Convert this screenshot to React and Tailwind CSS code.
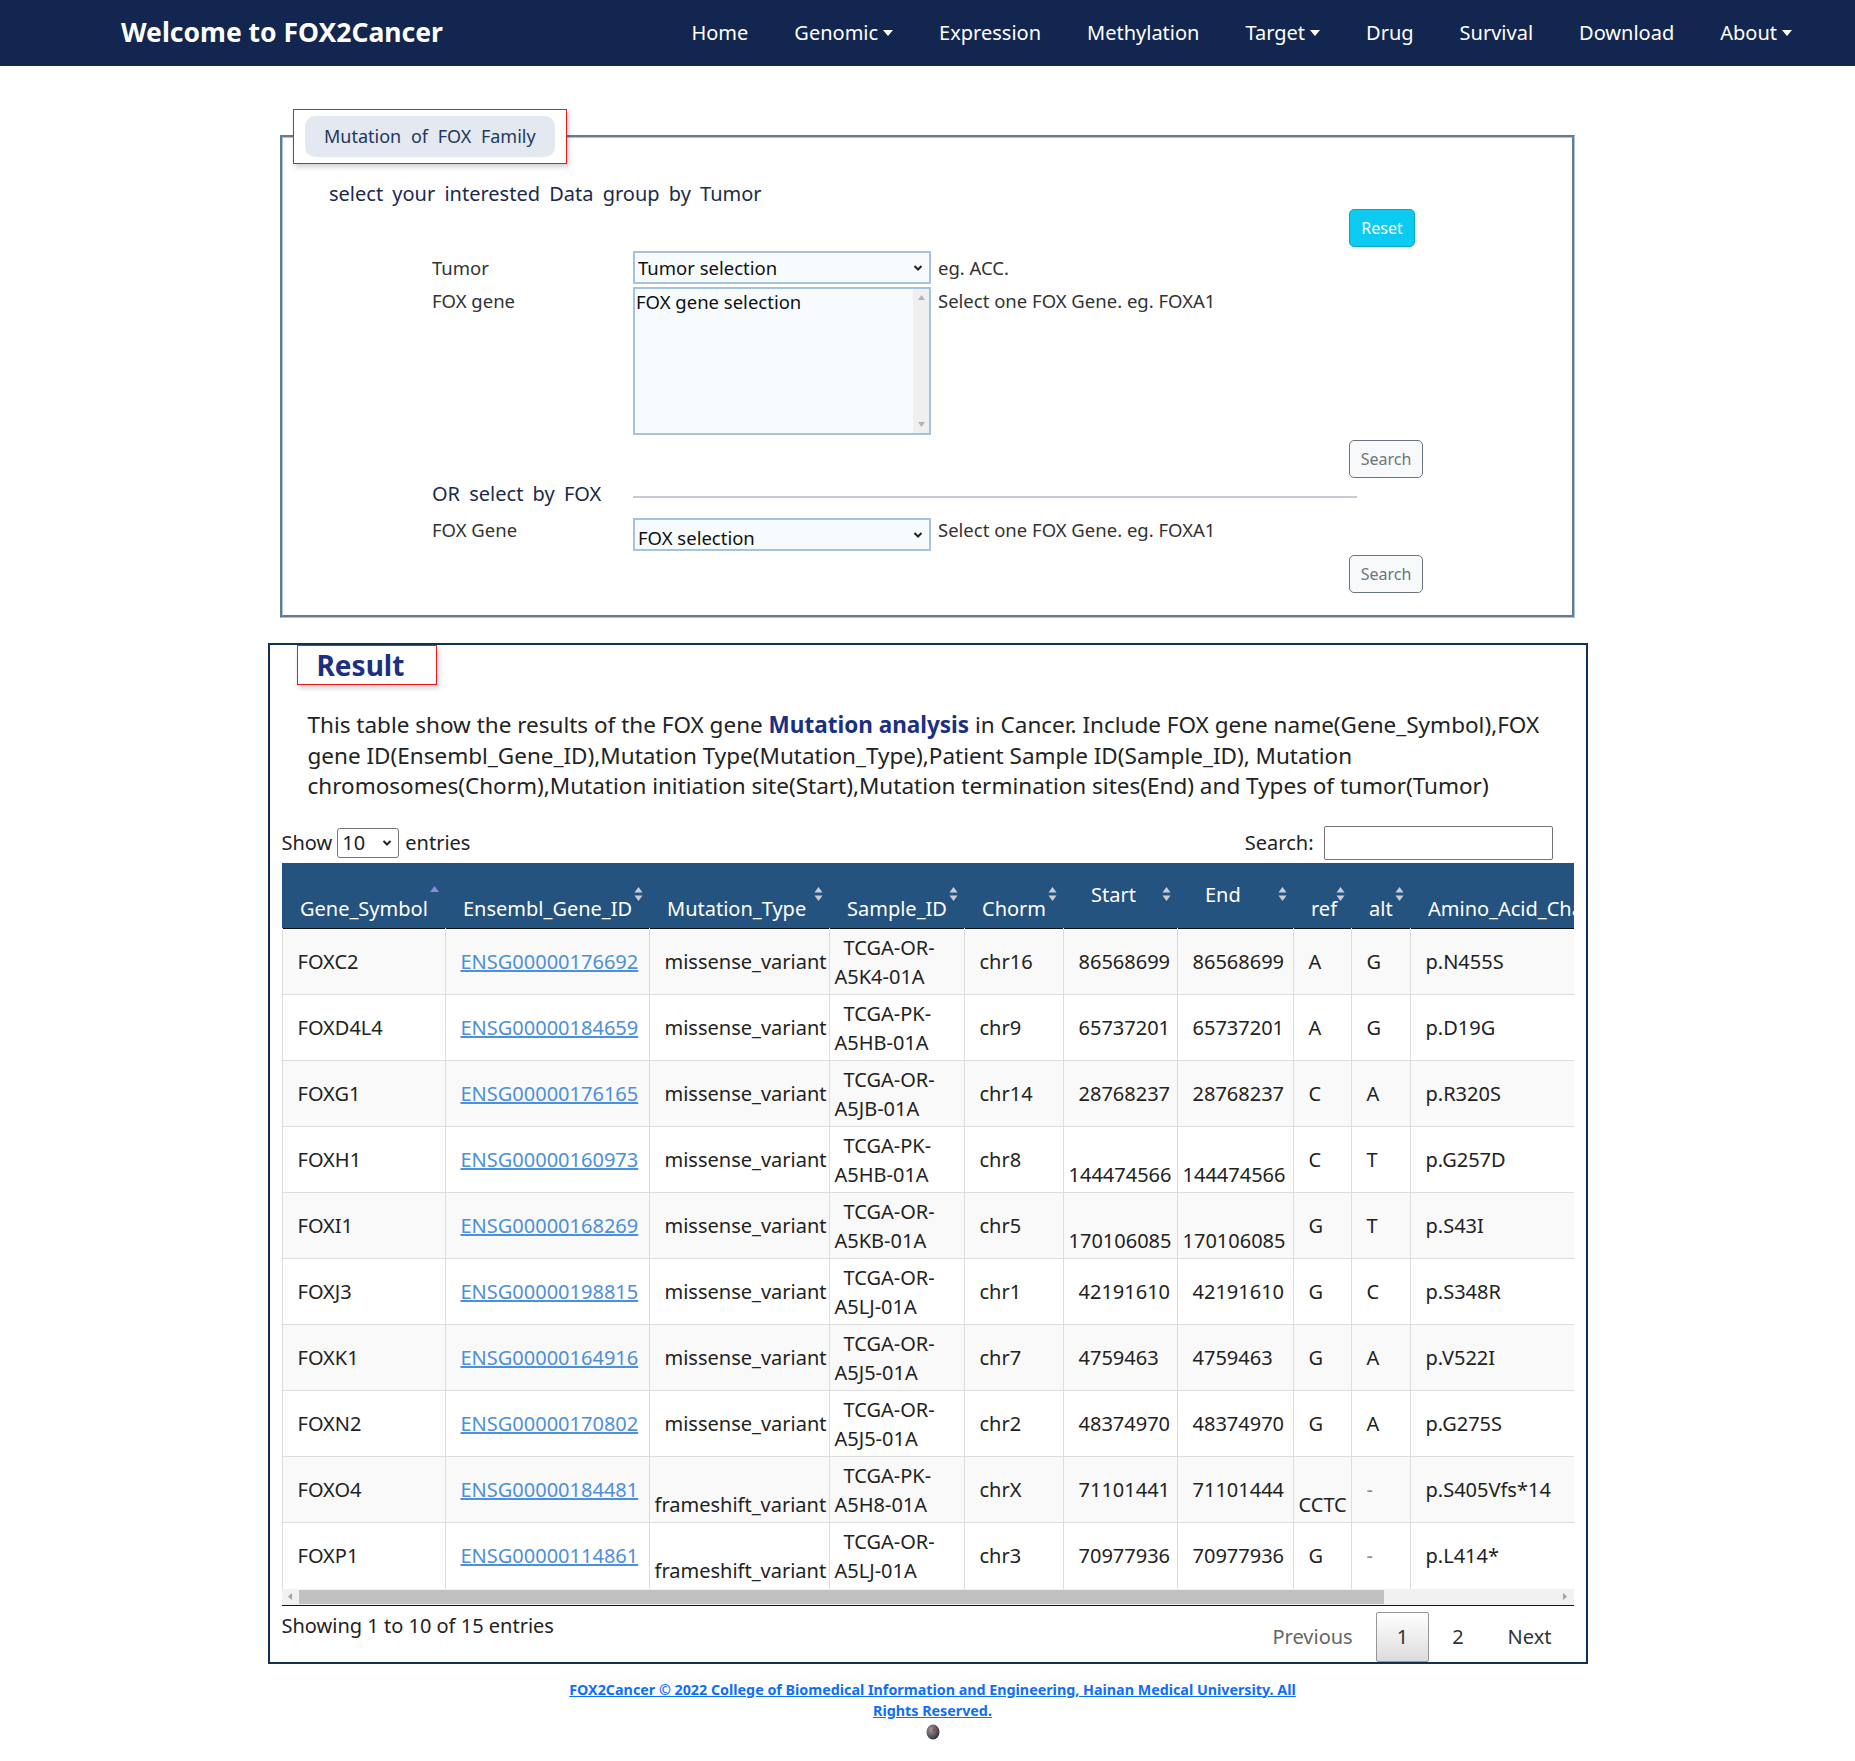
import React from 'react';

const navItems = [
  { label: 'Home' },
  { label: 'Genomic', caret: true },
  { label: 'Expression' },
  { label: 'Methylation' },
  { label: 'Target', caret: true },
  { label: 'Drug' },
  { label: 'Survival' },
  { label: 'Download' },
  { label: 'About', caret: true },
];

const columns = [
  { title: 'Gene_Symbol', width: 163, low: true, active: true },
  { title: 'Ensembl_Gene_ID', width: 204, low: true },
  { title: 'Mutation_Type', width: 180, low: true },
  { title: 'Sample_ID', width: 135, low: true },
  { title: 'Chorm', width: 99, low: true },
  { title: 'Start', width: 114 },
  { title: 'End', width: 116 },
  { title: 'ref', width: 58, low: true },
  { title: 'alt', width: 59, low: true },
  { title: 'Amino_Acid_Change', width: 240, low: true },
  { title: 'Tumor', width: 135, low: true },
];

// values prefixed with "~" sit on the second line (they wrap in the original)
const rows = [
  ['FOXC2', 'ENSG00000176692', 'missense_variant', ['TCGA-OR-', 'A5K4-01A'], 'chr16', '86568699', '86568699', 'A', 'G', 'p.N455S', 'ACC'],
  ['FOXD4L4', 'ENSG00000184659', 'missense_variant', ['TCGA-PK-', 'A5HB-01A'], 'chr9', '65737201', '65737201', 'A', 'G', 'p.D19G', 'ACC'],
  ['FOXG1', 'ENSG00000176165', 'missense_variant', ['TCGA-OR-', 'A5JB-01A'], 'chr14', '28768237', '28768237', 'C', 'A', 'p.R320S', 'ACC'],
  ['FOXH1', 'ENSG00000160973', 'missense_variant', ['TCGA-PK-', 'A5HB-01A'], 'chr8', '~144474566', '~144474566', 'C', 'T', 'p.G257D', 'ACC'],
  ['FOXI1', 'ENSG00000168269', 'missense_variant', ['TCGA-OR-', 'A5KB-01A'], 'chr5', '~170106085', '~170106085', 'G', 'T', 'p.S43I', 'ACC'],
  ['FOXJ3', 'ENSG00000198815', 'missense_variant', ['TCGA-OR-', 'A5LJ-01A'], 'chr1', '42191610', '42191610', 'G', 'C', 'p.S348R', 'ACC'],
  ['FOXK1', 'ENSG00000164916', 'missense_variant', ['TCGA-OR-', 'A5J5-01A'], 'chr7', '4759463', '4759463', 'G', 'A', 'p.V522I', 'ACC'],
  ['FOXN2', 'ENSG00000170802', 'missense_variant', ['TCGA-OR-', 'A5J5-01A'], 'chr2', '48374970', '48374970', 'G', 'A', 'p.G275S', 'ACC'],
  ['FOXO4', 'ENSG00000184481', '~frameshift_variant', ['TCGA-PK-', 'A5H8-01A'], 'chrX', '71101441', '71101444', '~CCTC', '-', 'p.S405Vfs*14', 'ACC'],
  ['FOXP1', 'ENSG00000114861', '~frameshift_variant', ['TCGA-OR-', 'A5LJ-01A'], 'chr3', '70977936', '70977936', 'G', '-', 'p.L414*', 'ACC'],
];

const Caret = () => (
  <span className="ml-[5px] inline-block border-x-[5px] border-x-transparent border-t-[6px] border-t-white align-middle" />
);

const SortIcon = ({ active }) => (
  <svg className="absolute right-[6px] top-[23px]" width="9" height="16" viewBox="0 0 9 16">
    {active ? (
      <path d="M4.5 0 L9 6 L0 6 Z" fill="#8a88e0" />
    ) : (
      <>
        <path d="M4.5 1 L8.5 6.5 L0.5 6.5 Z" fill="#c9cdd6" />
        <path d="M4.5 15 L8.5 9.5 L0.5 9.5 Z" fill="#c9cdd6" />
      </>
    )}
  </svg>
);

const Chevron = () => (
  <svg width="10" height="8" viewBox="0 0 10 8" className="absolute right-[6px] top-1/2 -translate-y-1/2">
    <path d="M1.5 2 L5 5.5 L8.5 2" stroke="#222" strokeWidth="2" fill="none" />
  </svg>
);

const FakeSelect = ({ text, low }) => (
  <div className="relative h-[33px] w-[298px] border-2 border-[#a3c3e1] bg-[#f7fbfd] pl-[3px] text-[18.5px] text-[#111]">
    <span className={low ? 'block leading-[36px]' : 'block leading-[29px]'}>{text}</span>
    <Chevron />
  </div>
);

const OutlineButton = ({ children }) => (
  <button className="h-[38px] w-[74px] rounded-[5px] border border-[#6c757d] bg-[#f8f9fa] text-[16px] text-[#6c757d]">
    {children}
  </button>
);

function Cell({ value, col, first }) {
  const base = `border-r border-[#dddddd] pl-[5px] pr-[2px] py-[3px] align-middle leading-[29px] ${first ? 'border-l' : ''}`;
  if (Array.isArray(value)) {
    return (
      <td className={base}>
        <span className="pl-[9px]">{value[0]}</span>
        <br />
        {value[1]}
      </td>
    );
  }
  const low = value.startsWith('~');
  const v = low ? value.slice(1) : value;
  const inner = col === 1 ? <a className="text-[#4d8fdb] underline">{v}</a> : v;
  return (
    <td className={base}>
      {low ? (
        <>
          <br />
          {inner}
        </>
      ) : (
        <span className={`pl-[10px] ${v === '-' ? 'text-[#888]' : ''}`}>{inner}</span>
      )}
    </td>
  );
}

const ScrollArrow = ({ dir }) => (
  <div className="flex w-[17px] items-center justify-center">
    <svg width="4" height="7" viewBox="0 0 4 7">
      <path d={dir === 'left' ? 'M4 0 L0 3.5 L4 7 Z' : 'M0 0 L4 3.5 L0 7 Z'} fill="#a3a3a3" />
    </svg>
  </div>
);

export default function App() {
  return (
    <div className="min-h-[1761px] bg-white font-['Noto_Sans',sans-serif] text-[#222]">
      {/* Navbar */}
      <nav className="flex h-[66px] items-center bg-[#13264f] pl-[121px] pr-[63px]">
        <div className="text-[26.5px] font-bold text-white">Welcome to FOX2Cancer</div>
        <ul className="ml-auto flex items-center gap-[46px] text-[20px] text-white">
          {navItems.map((n) => (
            <li key={n.label} className="flex items-center">
              {n.label}
              {n.caret && <Caret />}
            </li>
          ))}
        </ul>
      </nav>

      {/* Query form */}
      <fieldset className="mx-auto mt-[43px] w-[1295px] border-[3px] border-[#a6c4e2] pb-[22px] [border-style:groove]">
        <legend className="ml-[10px] border border-[#e41b1b] px-[11px] py-[6px] shadow-[2px_3px_5px_rgba(0,0,0,0.18)]">
          <div className="rounded-[10px] bg-[#e4e8f0] px-[19px] py-[8px] text-[18px] leading-[25px] text-[#22385a] [word-spacing:5px]">
            Mutation of FOX Family
          </div>
        </legend>

        <p className="ml-[46px] mt-[16px] text-[20px] leading-[28px] text-[#1a2b4c] [word-spacing:4px]">
          select your interested Data group by Tumor
        </p>

        <div className="ml-[149px] text-[18.5px] text-[#333]">
          <div className="mt-[1px] grid grid-cols-[201px_305px_411px_1fr]">
            <div className="col-start-4">
              <button className="h-[38px] w-[66px] rounded-[5px] border border-[#0aa8c8] bg-[#0dcaf0] text-[16px] text-white">
                Reset
              </button>
            </div>
          </div>

          <div className="mt-[4px] grid grid-cols-[201px_305px_411px_1fr] items-center">
            <div className="leading-[33px]">Tumor</div>
            <FakeSelect text="Tumor selection" />
            <div className="leading-[33px]">eg. ACC.</div>
          </div>

          <div className="mt-[3px] grid grid-cols-[201px_305px_411px_1fr] items-start">
            <div className="leading-[28px]">FOX gene</div>
            <div className="flex h-[148px] w-[298px] border-2 border-[#a3c3e1] bg-[#f7fbfd]">
              <div className="flex-1 pl-[1px] leading-[26px] text-[#111]">FOX gene selection</div>
              <div className="flex w-[16px] flex-col items-center justify-between bg-[#efefef] py-[6px]">
                <svg width="7" height="5" viewBox="0 0 7 5"><path d="M3.5 0 L7 5 L0 5 Z" fill="#b4b4b4" /></svg>
                <svg width="7" height="5" viewBox="0 0 7 5"><path d="M3.5 5 L7 0 L0 0 Z" fill="#b4b4b4" /></svg>
              </div>
            </div>
            <div className="leading-[28px]">Select one FOX Gene. eg. FOXA1</div>
          </div>

          <div className="mt-[5px] grid grid-cols-[201px_305px_411px_1fr]">
            <div className="col-start-4">
              <OutlineButton>Search</OutlineButton>
            </div>
          </div>

          <div className="mt-[2px] grid grid-cols-[201px_1fr] items-center">
            <div className="text-[20px] leading-[28px] text-[#1a2b4c] [word-spacing:4px]">OR select by FOX</div>
            <div className="mt-[5px] h-[2px] w-[724px] bg-[#c9c9d3]" />
          </div>

          <div className="mt-[10px] grid grid-cols-[201px_305px_411px_1fr] items-start">
            <div className="leading-[24px]">FOX Gene</div>
            <FakeSelect text="FOX selection" low />
            <div className="leading-[24px]">Select one FOX Gene. eg. FOXA1</div>
          </div>

          <div className="mt-[4px] grid grid-cols-[201px_305px_411px_1fr]">
            <div className="col-start-4">
              <OutlineButton>Search</OutlineButton>
            </div>
          </div>
        </div>
      </fieldset>

      {/* Result */}
      <section className="mx-auto mt-[25px] w-[1320px] border-2 border-[#0f3353] px-[12px]">
        <div className="ml-[15px] inline-block border border-[#e41b1b] pl-[19px] pr-[32px] text-[28px] font-bold leading-[38px] text-[#1b2f83] shadow-[2px_3px_5px_rgba(0,0,0,0.18)]">
          Result
        </div>

        <p className="ml-[26px] mt-[25px] w-[1262px] text-[22.5px] leading-[30.5px] text-[#222]">
          This table show the results of the FOX gene <b className="font-bold text-[#1b2f83]">Mutation analysis</b> in Cancer. Include FOX gene
          name(Gene_Symbol),FOX gene ID(Ensembl_Gene_ID),Mutation Type(Mutation_Type),Patient Sample ID(Sample_ID), Mutation
          chromosomes(Chorm),Mutation initiation site(Start),Mutation termination sites(End) and Types of tumor(Tumor)
        </p>

        <div className="mt-[24px] flex h-[34px] items-center justify-between text-[20px] text-[#222]">
          <div className="flex items-center">
            Show
            <div className="relative ml-[5px] mr-[6px] h-[30px] w-[62px] rounded-[3px] border border-[#767676] pl-[4px] leading-[28px]">
              10
              <Chevron />
            </div>
            entries
          </div>
          <div className="mr-[21px] flex items-center">
            Search:
            <div className="ml-[10px] h-[34px] w-[229px] rounded-[2px] border border-[#767676]" />
          </div>
        </div>

        <div className="mt-[3px] w-[1292px] border-b border-[#111]">
          <div className="overflow-hidden">
            <table className="w-[1503px] table-fixed border-collapse text-[20px] text-[#222]">
              <colgroup>
                {columns.map((c) => (
                  <col key={c.title} style={{ width: c.width }} />
                ))}
              </colgroup>
              <thead>
                <tr className="h-[66px] border-b border-[#111] bg-[#245380]">
                  {columns.map((c) => (
                    <th
                      key={c.title}
                      className={`relative whitespace-nowrap pl-[18px] text-left align-middle text-[20px] font-normal leading-[28px] text-white ${c.low ? 'pt-[28px]' : ''}`}
                    >
                      {c.low ? c.title : <span className="pl-[10px]">{c.title}</span>}
                      <SortIcon active={c.active} />
                    </th>
                  ))}
                </tr>
              </thead>
              <tbody>
                {rows.map((r, i) => (
                  <tr key={r[0]} className={`h-[66px] border-t border-[#dddddd] ${i % 2 === 0 ? 'bg-[#f9f9f9]' : 'bg-white'}`}>
                    {r.map((v, j) => (
                      <Cell key={j} value={v} col={j} first={j === 0} />
                    ))}
                  </tr>
                ))}
              </tbody>
            </table>
          </div>
          {/* horizontal scrollbar */}
          <div className="flex h-[16px] bg-[#f1f1f1]">
            <ScrollArrow dir="left" />
            <div className="my-[1px] w-[1085px] bg-[#c1c1c1]" />
            <div className="flex-1" />
            <ScrollArrow dir="right" />
          </div>
        </div>

        <div className="flex items-start justify-between pt-[6px] text-[20px]">
          <div className="leading-[28px] text-[#222]">Showing 1 to 10 of 15 entries</div>
          <div className="mr-[1px] flex items-center">
            <span className="flex h-[50px] items-center border border-transparent px-[20px] text-[#666]">Previous</span>
            <span className="ml-[2px] flex h-[50px] items-center rounded-[2px] border border-[#979797] bg-gradient-to-b from-white to-[#dcdcdc] px-[20px] text-[#333]">1</span>
            <span className="ml-[2px] flex h-[50px] items-center border border-transparent px-[20px] text-[#333]">2</span>
            <span className="ml-[2px] flex h-[50px] items-center border border-transparent px-[20px] text-[#333]">Next</span>
          </div>
        </div>
      </section>

      {/* Footer */}
      <footer className="mt-[15px] flex flex-col items-center pb-[22px] pl-[10px]">
        <a className="text-center text-[14.3px] font-bold leading-[21px] text-[#0d6efd] underline">
          FOX2Cancer © 2022 College of Biomedical Information and Engineering, Hainan Medical University. All
          <br />
          Rights Reserved.
        </a>
        <svg className="mt-[3px]" width="14" height="16" viewBox="0 0 14 16">
          <defs>
            <radialGradient id="g" cx="0.35" cy="0.35" r="0.7">
              <stop offset="0" stopColor="#9a9aa0" />
              <stop offset="1" stopColor="#2f3036" />
            </radialGradient>
          </defs>
          <ellipse cx="7" cy="8" rx="6.5" ry="7.5" fill="url(#g)" />
          <circle cx="8" cy="6" r="1.3" fill="#d22" />
        </svg>
      </footer>
    </div>
  );
}
